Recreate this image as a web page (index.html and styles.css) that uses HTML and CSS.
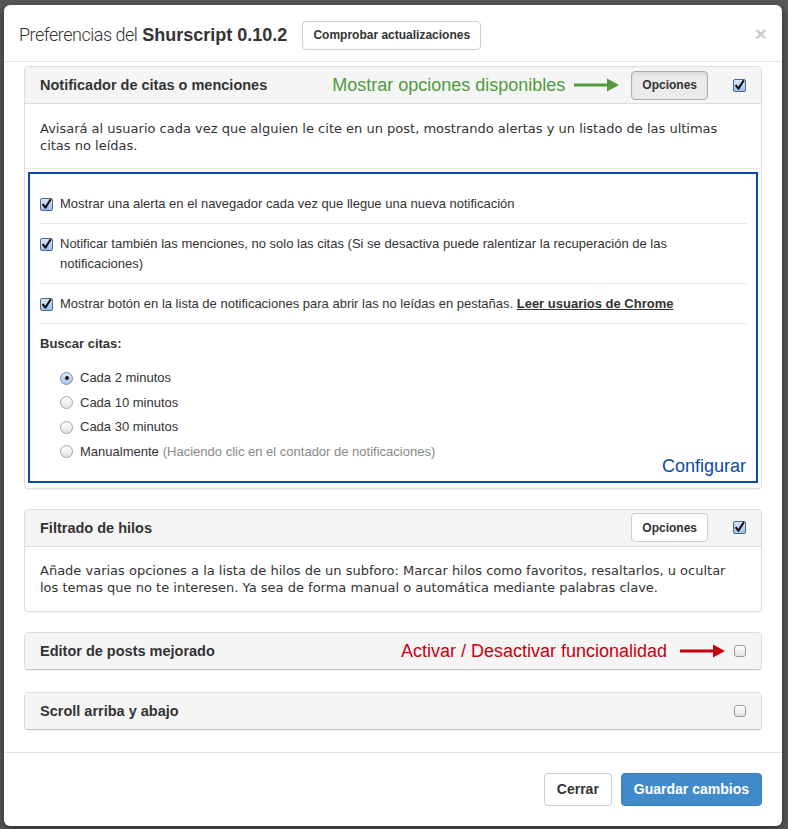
FILE: index.html
```html
<!DOCTYPE html>
<html lang="es">
<head>
<meta charset="utf-8">
<title>Preferencias del Shurscript</title>
<link rel="stylesheet" href="styles.css">
</head>
<body>
<div class="modal">
  <div class="modal-header">
    <h4 class="modal-title"><span class="light">Preferencias del</span> <b>Shurscript 0.10.2</b></h4>
    <button class="btn btn-sm">Comprobar actualizaciones</button>
    <span class="close">&times;</span>
  </div>

  <div class="modal-body">
    <div class="panel">
      <div class="panel-heading">
        <span class="panel-title">Notificador de citas o menciones</span>
        <span class="note note-green">Mostrar opciones disponibles</span>
        <svg class="arrow" width="45" height="14" viewBox="0 0 45 14"><rect x="0" y="5.5" width="34" height="3" fill="#4f9b3d"/><polygon points="33,0.5 45,7 33,13.5" fill="#4f9b3d"/></svg>
        <button class="btn btn-sm btn-active">Opciones</button>
        <span class="cb cb-on"><svg width="13" height="13" viewBox="0 0 13 13"><path d="M2.6 6.2 L5.4 9.6 L10.8 1.2" fill="none" stroke="#111" stroke-width="2.1" stroke-linejoin="round"/></svg></span>
      </div>
      <div class="panel-desc">Avisará al usuario cada vez que alguien le cite en un post, mostrando alertas y un listado de las ultimas citas no leídas.</div>
      <div class="options">
        <div class="opt">
          <span class="cb cb-on"><svg width="13" height="13" viewBox="0 0 13 13"><path d="M2.6 6.2 L5.4 9.6 L10.8 1.2" fill="none" stroke="#111" stroke-width="2.1" stroke-linejoin="round"/></svg></span>
          <span class="opt-text">Mostrar una alerta en el navegador cada vez que llegue una nueva notificación</span>
        </div>
        <div class="opt">
          <span class="cb cb-on"><svg width="13" height="13" viewBox="0 0 13 13"><path d="M2.6 6.2 L5.4 9.6 L10.8 1.2" fill="none" stroke="#111" stroke-width="2.1" stroke-linejoin="round"/></svg></span>
          <span class="opt-text">Notificar también las menciones, no solo las citas (Si se desactiva puede ralentizar la recuperación de las notificaciones)</span>
        </div>
        <div class="opt">
          <span class="cb cb-on"><svg width="13" height="13" viewBox="0 0 13 13"><path d="M2.6 6.2 L5.4 9.6 L10.8 1.2" fill="none" stroke="#111" stroke-width="2.1" stroke-linejoin="round"/></svg></span>
          <span class="opt-text">Mostrar botón en la lista de notificaciones para abrir las no leídas en pestañas. <a class="link">Leer usuarios de Chrome</a></span>
        </div>
        <div class="opt-label">Buscar citas:</div>
        <div class="radio"><span class="rd rd-on"></span>Cada 2 minutos</div>
        <div class="radio"><span class="rd"></span>Cada 10 minutos</div>
        <div class="radio"><span class="rd"></span>Cada 30 minutos</div>
        <div class="radio"><span class="rd"></span>Manualmente <span class="muted">(Haciendo clic en el contador de notificaciones)</span></div>
        <span class="configurar">Configurar</span>
      </div>
    </div>

    <div class="panel">
      <div class="panel-heading">
        <span class="panel-title">Filtrado de hilos</span>
        <button class="btn btn-sm btn-push">Opciones</button>
        <span class="cb cb-on"><svg width="13" height="13" viewBox="0 0 13 13"><path d="M2.6 6.2 L5.4 9.6 L10.8 1.2" fill="none" stroke="#111" stroke-width="2.1" stroke-linejoin="round"/></svg></span>
      </div>
      <div class="panel-body">Añade varias opciones a la lista de hilos de un subforo: Marcar hilos como favoritos, resaltarlos, u ocultar los temas que no te interesen. Ya sea de forma manual o automática mediante palabras clave.</div>
    </div>

    <div class="panel panel-flat">
      <div class="panel-heading">
        <span class="panel-title">Editor de posts mejorado</span>
        <span class="note note-red">Activar / Desactivar funcionalidad</span>
        <svg class="arrow arrow-red" width="45" height="14" viewBox="0 0 45 14"><rect x="0" y="5.5" width="34" height="3" fill="#c8000f"/><polygon points="33,0.5 45,7 33,13.5" fill="#c8000f"/></svg>
        <span class="cb cb-off cb-push"></span>
      </div>
    </div>

    <div class="panel panel-flat">
      <div class="panel-heading">
        <span class="panel-title">Scroll arriba y abajo</span>
        <span class="cb cb-off cb-push"></span>
      </div>
    </div>
  </div>

  <div class="modal-footer">
    <button class="btn btn-default">Cerrar</button>
    <button class="btn btn-primary">Guardar cambios</button>
  </div>
</div>
</body>
</html>
```

FILE: styles.css
```css
* { box-sizing: border-box; }
html, body { margin: 0; padding: 0; }
body {
  background: #585858;
  font-family: "Liberation Sans", Arial, sans-serif;
  font-size: 13px;
  color: #333;
  padding: 5px 6px 5px 4px;
}
.modal {
  width: 778px;
  background: #fff;
  border-radius: 6px;
  box-shadow: 0 3px 9px rgba(0,0,0,.5);
}
.modal-header {
  display: flex;
  align-items: center;
  padding: 15px 15px 11px 15px;
  border-bottom: 1px solid #e5e5e5;
}
.modal-title {
  margin: 0;
  font-size: 18px;
  line-height: 29px;
  font-weight: normal;
  color: #333;
}
.modal-title .light { font-family: Roboto, "Liberation Sans", sans-serif; font-weight: 300; letter-spacing: -0.5px; }
.modal-title b { font-weight: bold; }
.btn {
  font-family: "Liberation Sans", Arial, sans-serif;
  font-weight: bold;
  color: #333;
  background: #fff;
  border: 1px solid #ccc;
  border-radius: 4px;
  cursor: pointer;
}
.btn-sm {
  height: 29px;
  font-size: 12px;
  padding: 0 10px;
}
.modal-header .btn-sm { margin-left: 15px; }
.btn-active {
  background: #ebebeb;
  border-color: #adadad;
  box-shadow: inset 0 2px 4px rgba(0,0,0,.08);
}
.close {
  margin-left: auto;
  font-size: 21px;
  font-weight: bold;
  line-height: 1;
  color: #000;
  opacity: .2;
  margin-top: -3px;
}
.modal-body {
  padding: 4px 20px 22px 20px;
}
.panel {
  border: 1px solid #ddd;
  border-radius: 4px;
  margin-bottom: 20px;
  box-shadow: 0 1px 1px rgba(0,0,0,.05);
  background: #fff;
}
.panel:last-child { margin-bottom: 0; }
.panel-flat { margin-bottom: 22px; }
.panel-flat .panel-heading { border-bottom: 0; border-radius: 3px; height: 36px; box-shadow: 0 1px 1px rgba(0,0,0,.12); }
.panel-heading {
  display: flex;
  align-items: center;
  height: 37px;
  padding: 0 15px;
  background: #f5f5f5;
  border-bottom: 1px solid #ddd;
  border-radius: 3px 3px 0 0;
}
.panel-title {
  font-size: 14.5px;
  font-weight: bold;
  color: #333;
  margin-right: auto;
}
.note {
  font-size: 18px;
  line-height: 20px;
}
.note-green { color: #4f9b3d; }
.note-red { color: #c8000f; }
.arrow { margin-left: 9px; margin-right: 12px; flex: none; }
.arrow-red { margin-left: 13px; margin-right: 9px; }
.btn-push { margin-left: auto; }
.cb {
  flex: none;
  display: inline-block;
  width: 13px;
  height: 13px;
  border-radius: 2px;
  position: relative;
}
.panel-heading .cb { margin-left: 25px; }
.panel-heading .cb-push { margin-left: auto; }
.note + .arrow + .cb-push { margin-left: 0; }
.cb-on {
  border: 1px solid #4f6789;
  background: linear-gradient(#d9e8fa, #9dbfe8);
}
.cb-on svg { position: absolute; left: -1px; top: -1px; }
.cb-off {
  width: 12px;
  height: 12px;
  border: 1px solid #9a9a9a;
  border-radius: 3px;
  background: linear-gradient(#fdfdfd, #e4e4e4);
}
.panel-desc {
  font-family: "DejaVu Sans", Verdana, sans-serif;
  font-size: 13px;
  line-height: 17px;
  padding: 16px 15px 14px 15px;
  border-bottom: 1px solid #e8e8e8;
}
.panel-body {
  font-family: "DejaVu Sans", Verdana, sans-serif;
  font-size: 13px;
  line-height: 17px;
  padding: 15px;
}
.options {
  position: relative;
  margin: 3px 3px 5px 3px;
  border: 2px solid #0b4aa8;
  padding: 10px 9px 19px 10px;
}
.opt {
  display: flex;
  align-items: flex-start;
  padding: 10px 0 9px 0;
  border-bottom: 1px solid #e8e8e8;
  line-height: 20px;
  font-size: 13px;
}
.opt .cb { margin: 4px 7px 0 0; }
.link { font-weight: bold; text-decoration: underline; color: #333; }
.opt-label {
  font-weight: bold;
  font-size: 13px;
  line-height: 20px;
  padding-top: 10px;
  margin-bottom: 14px;
}
.radio {
  display: flex;
  align-items: center;
  line-height: 20px;
  font-size: 13px;
  margin-bottom: 4.67px;
  padding-left: 20px;
}
.radio:last-of-type { margin-bottom: 0; }
.rd {
  flex: none;
  width: 13px;
  height: 13px;
  border-radius: 50%;
  border: 1px solid #a3a3a3;
  background: linear-gradient(#ffffff, #e2e2e2);
  margin-right: 7px;
  position: relative;
}
.rd-on {
  border-color: #6f8fbf;
  background: linear-gradient(#dfeafa, #a9c6ec);
}
.rd-on::after {
  content: "";
  position: absolute;
  left: 3.5px;
  top: 3.5px;
  width: 4px;
  height: 4px;
  border-radius: 50%;
  background: #1c1c1c;
}
.muted { color: #888; margin-left: 4px; }
.configurar {
  position: absolute;
  right: 10px;
  bottom: 5px;
  font-size: 18px;
  line-height: 20px;
  color: #0b4aa8;
}
.modal-footer {
  display: flex;
  justify-content: flex-end;
  gap: 9px;
  padding: 20px 20px 20px 20px;
  border-top: 1px solid #e5e5e5;
}
.btn-default, .btn-primary {
  height: 33px;
  font-size: 14px;
  padding: 0 12px;
}
.btn-primary {
  background: #428bca;
  border-color: #357ebd;
  color: #fff;
}
```
